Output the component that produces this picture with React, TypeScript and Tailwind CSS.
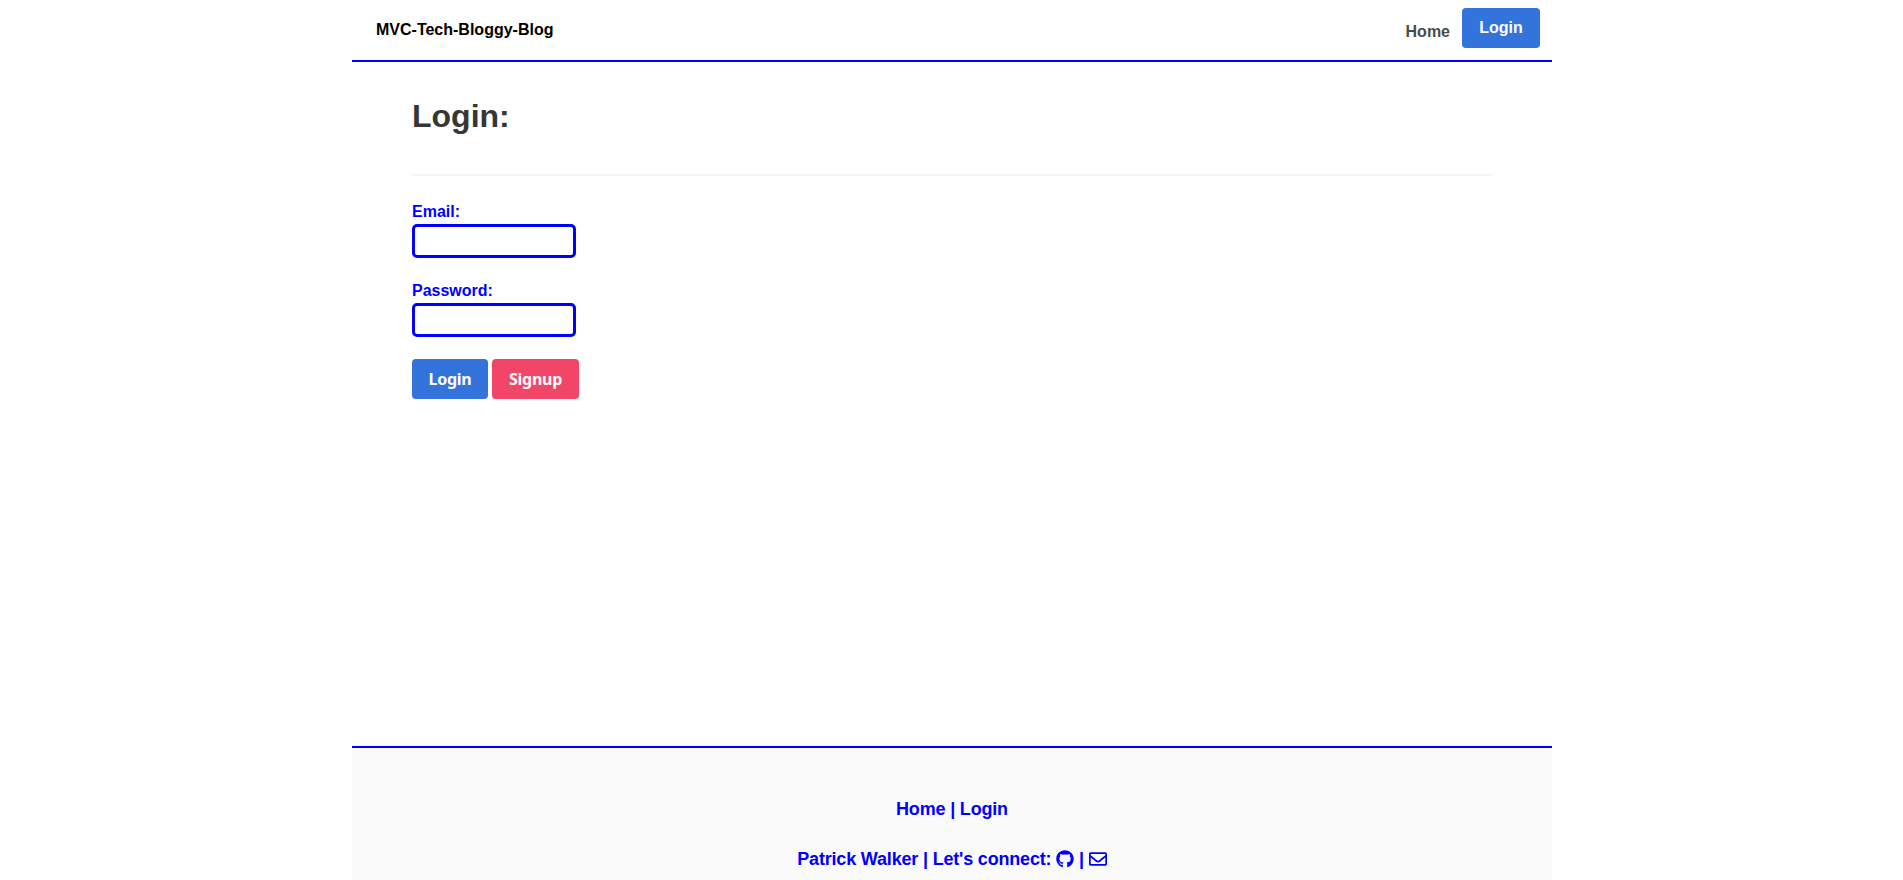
import { FaGithub, FaRegEnvelope } from "react-icons/fa";

function Header() {
  return (
    <header className="flex h-[62px] items-start justify-between border-b-2 border-[#0000ff] pl-6 pr-3">
      <a href="#" className="mt-[18px] leading-6 text-black">
        MVC-Tech-Bloggy-Blog
      </a>
      <nav className="flex items-start gap-3">
        <a href="#" className="mt-[20px] leading-6 text-[#4a4a4a]">
          Home
        </a>
        <button className="mt-2 h-10 w-[78px] rounded bg-[#3273dc] leading-6 text-white">Login</button>
      </nav>
    </header>
  );
}

function Field({ label, type }: { label: string; type: string }) {
  return (
    <label className="block h-[79px] leading-6 text-[#0000ff]">
      {label}
      <input type={type} className="block h-[34px] w-[164px] rounded-[5px] border-3 border-[#0000ff] bg-white px-1" />
    </label>
  );
}

function LoginForm() {
  return (
    <main className="h-[684px] px-[60px]">
      <h1 className="pt-[36px] text-[32px] leading-9 text-[#363636]">Login:</h1>
      <hr className="mt-[40px] h-0.5 border-0 bg-[#f5f5f5]" />
      <form className="pt-[24px]" onSubmit={(e) => e.preventDefault()}>
        <Field label="Email:" type="email" />
        <Field label="Password:" type="password" />
        <div className="mt-[1px] flex gap-1 font-['Noto_Sans',sans-serif] tracking-[-0.25px] text-white">
          <button className="h-10 w-[76px] rounded bg-[#3273dc]">Login</button>
          <button className="h-10 w-[87px] rounded bg-[#f14668]">Signup</button>
        </div>
      </form>
    </main>
  );
}

function Footer() {
  return (
    <footer className="h-[134px] border-t-2 border-[#0000ff] bg-[#fafafa] pt-[48px] text-center text-[18px] leading-[27px] tracking-[-0.18px] text-[#0000ff]">
      <p>
        <a href="#">Home</a> | <a href="#">Login</a>
      </p>
      <p className="mt-[23px]">
        Patrick Walker | Let's connect:{" "}
        <a href="#" aria-label="GitHub">
          <FaGithub className="inline-block align-[-3px]" />
        </a>{" "}
        |{" "}
        <a href="#" aria-label="Email">
          <FaRegEnvelope className="inline-block align-[-3px]" />
        </a>
      </p>
    </footer>
  );
}

export default function App() {
  return (
    <div className="h-screen overflow-hidden bg-white pl-px font-['Liberation_Sans',Arial,sans-serif] text-base font-bold">
      <div className="mx-auto w-[1200px]">
        <Header />
        <LoginForm />
        <Footer />
      </div>
    </div>
  );
}
